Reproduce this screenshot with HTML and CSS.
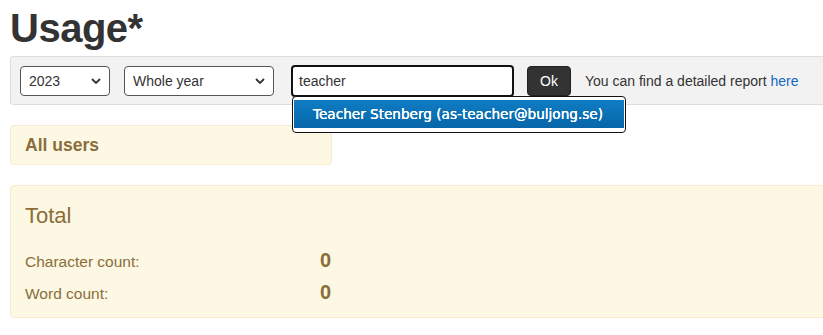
FILE: index.html
```html
<!DOCTYPE html>
<html lang="en">
<head>
  <meta charset="UTF-8">
  <title>Usage</title>
  <link rel="stylesheet" href="styles.css">
</head>
<body>
  <div class="page">
    <h1>Usage*</h1>

    <!-- Filter bar -->
    <form class="filter-bar">
      <select class="year-select">
        <option>2023</option>
      </select>
      <select class="period-select">
        <option>Whole year</option>
      </select>
      <div class="search-wrap">
        <input class="user-search" type="text" value="teacher">
        <ul class="autocomplete">
          <li class="active">Teacher Stenberg (as-teacher@buljong.se)</li>
        </ul>
      </div>
      <button type="button" class="ok-btn">Ok</button>
      <span class="report-note">You can find a detailed report <a href="#">here</a></span>
    </form>

    <div class="panel user-panel">All users</div>

    <div class="panel total-panel">
      <h2>Total</h2>
      <div class="stat-row">
        <span class="stat-label">Character count:</span>
        <span class="stat-value">0</span>
      </div>
      <div class="stat-row">
        <span class="stat-label">Word count:</span>
        <span class="stat-value">0</span>
      </div>
    </div>
  </div>
</body>
</html>
```

FILE: styles.css
```css
html, body {
  margin: 0;
  overflow: hidden;
}
body {
  font-family: "Liberation Sans", Arial, sans-serif;
  font-size: 14px;
  color: #333;
  background: #fff;
}
.page {
  width: 860px;
  padding: 0 10px;
}
h1 {
  font-size: 40px;
  font-weight: bold;
  margin: 6px 0 0;
  line-height: 44px;
  letter-spacing: -0.5px;
}

/* Filter bar */
.filter-bar {
  display: flex;
  align-items: center;
  margin-top: 6px;
  height: 47px;
  padding: 0 9px;
  background: #f2f2f2;
  border: 1px solid #ddd;
  border-radius: 3px;
}
select {
  font-family: "Liberation Sans", Arial, sans-serif;
  font-size: 14px;
  color: #333;
  height: 30px;
  padding: 0 8px;
  border: 1px solid #555;
  border-radius: 4px;
  background: #fff url("data:image/svg+xml,%3Csvg xmlns='http://www.w3.org/2000/svg' width='10' height='6'%3E%3Cpath d='M1 1l4 4 4-4' fill='none' stroke='%23333' stroke-width='1.8'/%3E%3C/svg%3E") no-repeat right 8px center;
  appearance: none;
}
.year-select {
  width: 90px;
}
.period-select {
  width: 150px;
  margin-left: 14px;
}
.search-wrap {
  position: relative;
  margin-left: 17px;
}
.user-search {
  display: block;
  box-sizing: border-box;
  width: 223px;
  height: 32px;
  padding: 0 6px;
  font-family: "Liberation Sans", Arial, sans-serif;
  font-size: 14px;
  color: #333;
  border: 2px solid #111;
  border-radius: 4px;
  outline: none;
}
.autocomplete {
  position: absolute;
  left: 1px;
  top: 31px;
  width: 334px;
  box-sizing: border-box;
  margin: 0;
  padding: 3px 1px 4px;
  list-style: none;
  background: #fff;
  border: 1px solid #111;
  border-radius: 4px;
  z-index: 2;
}
.autocomplete li {
  height: 28px;
  line-height: 28px;
  padding-left: 19px;
  white-space: nowrap;
  font-family: "DejaVu Sans", Verdana, sans-serif;
  font-size: 13.6px;
  color: #fff;
  background: linear-gradient(#0f7cc3, #0766a9);
  text-shadow: 0 0 0.6px #fff, 0 0 0.3px #fff;
}
.ok-btn {
  margin-left: 13px;
  width: 44px;
  height: 30px;
  padding: 0;
  font-family: "Liberation Sans", Arial, sans-serif;
  font-size: 14px;
  color: #fff;
  background: #333;
  border: 1px solid #222;
  border-radius: 4px;
}
.report-note {
  margin-left: 14px;
  font-size: 14px;
  color: #333;
}
.report-note a {
  color: #1467c4;
  text-decoration: none;
}

/* Panels */
.panel {
  background: #fcf8e3;
  border: 1px solid #faebcc;
  border-radius: 4px;
  color: #8a6d3b;
}
.user-panel {
  width: 292px;
  margin-top: 20px;
  padding: 10px 14px 10px 14px;
  font-size: 17.5px;
  font-weight: bold;
  line-height: 18px;
}
.total-panel {
  margin-top: 20px;
  padding: 17px 14px 4px;
}
.total-panel h2 {
  margin: 0 0 20px;
  font-size: 22px;
  font-weight: 300;
  line-height: 26px;
}
.stat-row {
  display: flex;
  align-items: baseline;
  height: 32px;
}
.stat-label {
  width: 295px;
  font-size: 15.5px;
}
.stat-value {
  font-size: 20px;
  font-weight: bold;
}
```
